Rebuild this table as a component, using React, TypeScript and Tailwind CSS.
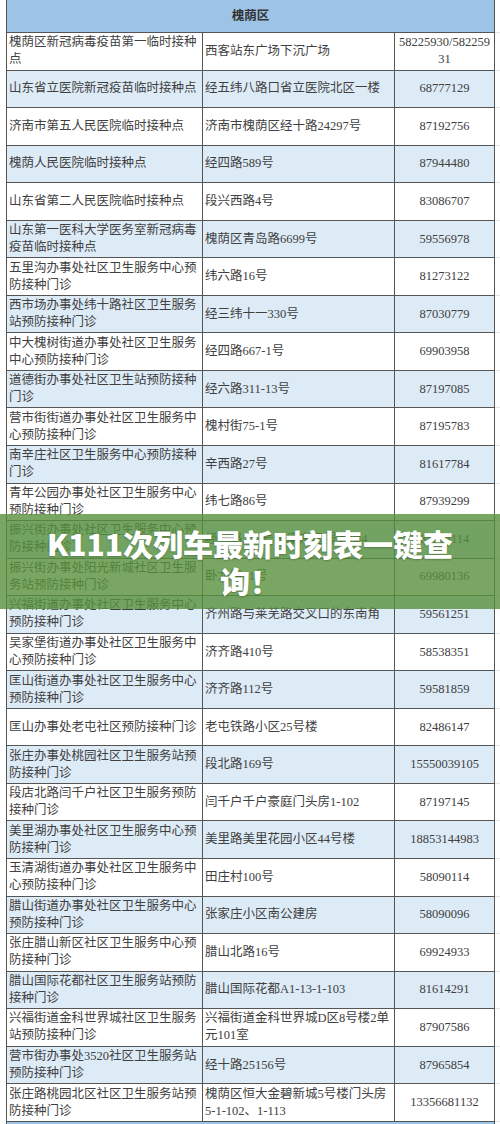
const rows: [string, string, string][] = [
  ["槐荫区新冠病毒疫苗第一临时接种点", "西客站东广场下沉广场", "58225930/58225931"],
  ["山东省立医院新冠疫苗临时接种点", "经五纬八路口省立医院北区一楼", "68777129"],
  ["济南市第五人民医院临时接种点", "济南市槐荫区经十路24297号", "87192756"],
  ["槐荫人民医院临时接种点", "经四路589号", "87944480"],
  ["山东省第二人民医院临时接种点", "段兴西路4号", "83086707"],
  ["山东第一医科大学医务室新冠病毒疫苗临时接种点", "槐荫区青岛路6699号", "59556978"],
  ["五里沟办事处社区卫生服务中心预防接种门诊", "纬六路16号", "81273122"],
  ["西市场办事处纬十路社区卫生服务站预防接种门诊", "经三纬十一330号", "87030779"],
  ["中大槐树街道办事处社区卫生服务中心预防接种门诊", "经四路667-1号", "69903958"],
  ["道德街办事处社区卫生站预防接种门诊", "经六路311-13号", "87197085"],
  ["营市街街道办事处社区卫生服务中心预防接种门诊", "槐村街75-1号", "87195783"],
  ["南辛庄社区卫生服务中心预防接种门诊", "辛西路27号", "81617784"],
  ["青年公园办事处社区卫生服务中心预防接种门诊", "纬七路86号", "87939299"],
  ["振兴街办事处社区卫生服务中心预防接种门诊", "经七路223号民康东区服务楼4", "87097114"],
  ["振兴街办事处阳光新城社区卫生服务站预防接种门诊", "卧龙路91号", "69980136"],
  ["兴福街道办事处社区卫生服务中心预防接种门诊", "齐州路与莱芜路交叉口的东南角", "59561251"],
  ["吴家堡街道办事处社区卫生服务中心预防接种门诊", "济齐路410号", "58538351"],
  ["匡山街道办事处社区卫生服务中心预防接种门诊", "济齐路112号", "59581859"],
  ["匡山办事处老屯社区预防接种门诊", "老屯铁路小区25号楼", "82486147"],
  ["张庄办事处桃园社区卫生服务站预防接种门诊", "段北路169号", "15550039105"],
  ["段店北路闫千户社区卫生服务预防接种门诊", "闫千户千户豪庭门头房1-102", "87197145"],
  ["美里湖办事处社区卫生服务中心预防接种门诊", "美里路美里花园小区44号楼", "18853144983"],
  ["玉清湖街道办事处社区卫生服务中心预防接种门诊", "田庄村100号", "58090114"],
  ["腊山街道办事处社区卫生服务中心预防接种门诊", "张家庄小区南公建房", "58090096"],
  ["张庄腊山新区社区卫生服务中心预防接种门诊", "腊山北路16号", "69924933"],
  ["腊山国际花都社区卫生服务站预防接种门诊", "腊山国际花都A1-13-1-103", "81614291"],
  ["兴福街道金科世界城社区卫生服务站预防接种门诊", "兴福街道金科世界城D区8号楼2单元101室", "87907586"],
  ["营市街办事处3520社区卫生服务站预防接种门诊", "经十路25156号", "87965854"],
  ["张庄路桃园北区社区卫生服务站预防接种门诊", "槐荫区恒大金碧新城5号楼门头房5-1-102、1-113", "13356681132"],
];

const font = { fontFamily: '"Liberation Serif", "Noto Sans CJK SC", serif' };

export default function App() {
  return (
    <div className="relative h-[1124px] w-[500px] overflow-hidden bg-white text-[12.5px] leading-[17px] text-[#404040]" style={font}>
      {/* district header */}
      <div className="flex">
        <div className="ml-[6px] flex h-[33px] w-[489px] items-center justify-center border-x border-b border-[#555] bg-[#9dc3e6] font-bold text-[#333]">
          槐荫区
        </div>
        <div className="flex-1 border-b border-[#e2e2e2]" />
      </div>

      {rows.map(([name, addr, phone], i) => (
        <div key={i} className="flex">
          <div
            className={`ml-[6px] grid h-[37.55px] w-[489px] grid-cols-[196px_192px_99px] border-x border-b border-[#555] ${
              i % 2 === 1 ? "bg-[#ddebf7]" : "bg-white"
            }`}
          >
            <div className="flex items-center border-r border-[#555] px-[2px]">{name}</div>
            <div className="flex items-center border-r border-[#555] px-[2px]">{addr}</div>
            <div className="flex items-center justify-center break-all px-[2px] text-center">{phone}</div>
          </div>
          <div className="flex-1 border-b border-[#e2e2e2]" />
        </div>
      ))}

      {/* start of the next district block, cut by the page edge */}
      <div className="flex">
        <div className="ml-[6px] h-[33px] w-[489px] border-x border-[#555] bg-[#9dc3e6]" />
        <div className="flex-1" />
      </div>

      {/* title banner laid over the table */}
      <div className="absolute left-0 top-[514px] flex h-[95px] w-full items-center justify-center bg-[rgba(88,145,60,0.8)] px-[40px]">
        <h1
          className="text-center text-[30px] font-black leading-[37px] text-white [text-shadow:0_1px_2px_rgba(0,0,0,0.25)]"
          style={{ fontFamily: '"Noto Sans CJK SC", "Noto Sans", sans-serif' }}
        >
          K111次列车最新时刻表一键查询！
        </h1>
      </div>
    </div>
  );
}
